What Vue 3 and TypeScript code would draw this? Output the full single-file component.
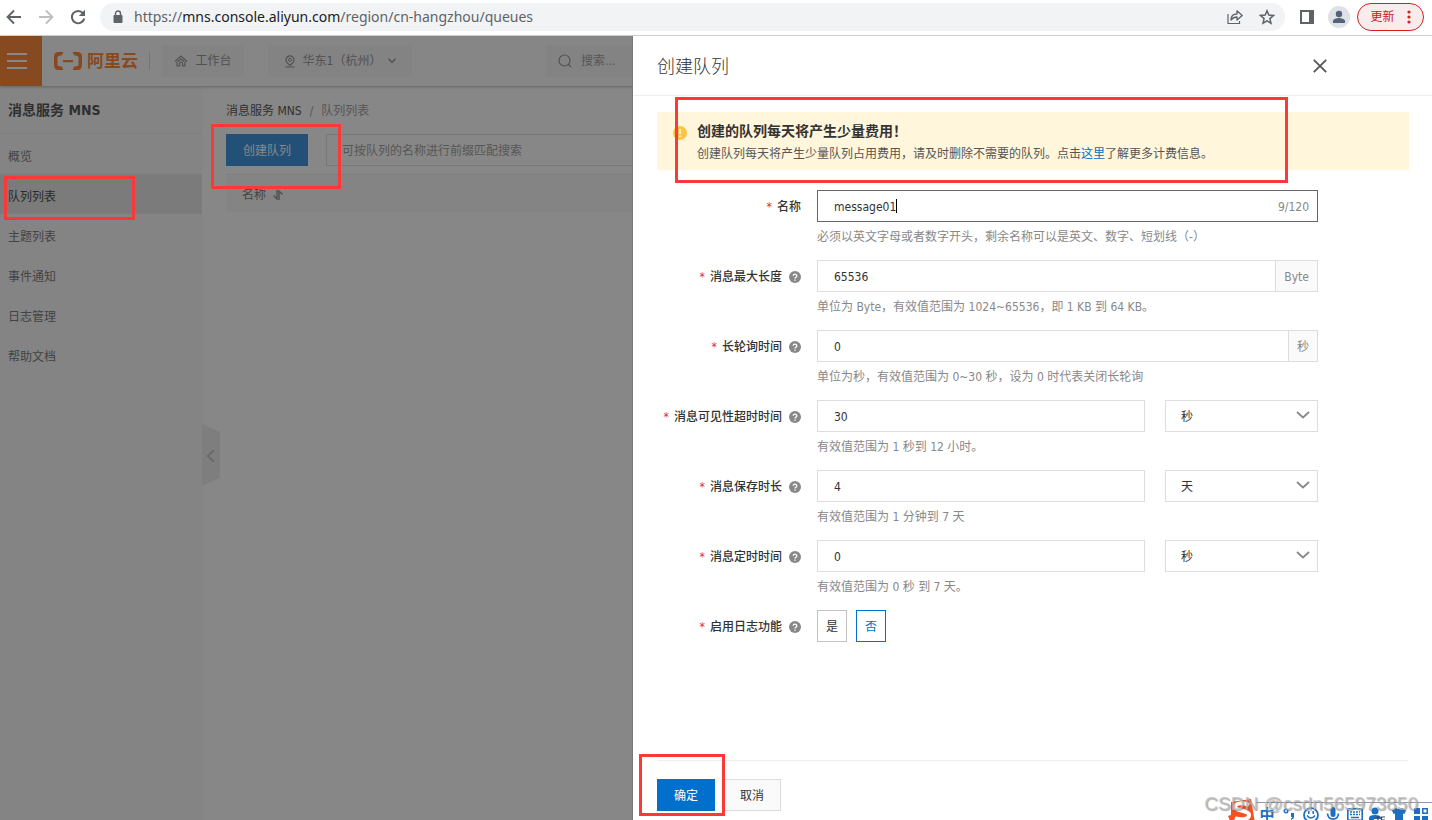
<script setup lang="ts">
import { computed, ref } from 'vue'

interface Field {
  id: string
  label: string
  value: string
  help: string
  addon?: string
  unit?: string
}

const menu: string[] = ['概览', '队列列表', '主题列表', '事件通知', '日志管理', '帮助文档']
const current = ref('队列列表')

const queueName = ref('message01')
const nameCount = computed(() => `${queueName.value.length}/120`)
const logging = ref('no')

const fields = ref<Field[]>([
  { id: 'max-size', label: '消息最大长度', value: '65536', addon: 'Byte', help: '单位为 Byte，有效值范围为 1024~65536，即 1 KB 到 64 KB。' },
  { id: 'polling', label: '长轮询时间', value: '0', addon: '秒', help: '单位为秒，有效值范围为 0~30 秒，设为 0 时代表关闭长轮询' },
  { id: 'visibility', label: '消息可见性超时时间', value: '30', unit: '秒', help: '有效值范围为 1 秒到 12 小时。' },
  { id: 'retention', label: '消息保存时长', value: '4', unit: '天', help: '有效值范围为 1 分钟到 7 天' },
  { id: 'delay', label: '消息定时时间', value: '0', unit: '秒', help: '有效值范围为 0 秒 到 7 天。' },
])
const units: string[] = ['秒', '分钟', '小时', '天']
</script>

<template>
  <div class="window">
    <div class="browser">
      <button class="nav-btn" aria-label="后退">
        <svg width="16" height="16" viewBox="0 0 16 16"><path d="M15 8H2M8 1.5 1.6 8 8 14.500" fill="none" stroke="#5f6368" stroke-width="1.900" /></svg>
      </button>
      <button class="nav-btn" aria-label="前进">
        <svg width="16" height="16" viewBox="0 0 16 16"><path d="M1 8h13M8 1.5 14.400 8 8 14.500" fill="none" stroke="#bdc0c3" stroke-width="1.900" /></svg>
      </button>
      <button class="nav-btn" aria-label="重新加载">
        <svg width="16" height="16" viewBox="0 0 16 16"><path d="M13 4.200A6.200 6.200 0 1 0 14.200 9.500" fill="none" stroke="#5f6368" stroke-width="2" /><path d="M15 .8v6.200H8.800z" fill="#5f6368" /></svg>
      </button>
      <div class="omnibox">
        <svg width="10" height="13" viewBox="0 0 10 13"><rect x="0.500" y="5" width="9" height="8" rx="1" fill="#5f6368" /><path d="M2.500 5.500V3.500a2.500 2.500 0 0 1 5 0v2" fill="none" stroke="#5f6368" stroke-width="1.400" /></svg>
        <span class="url">https://<b>mns.console.aliyun.com</b>/region/cn-hangzhou/queues</span>
        <button class="tool" aria-label="分享">
          <svg width="16" height="16" viewBox="0 0 16 16"><path d="M1 5v9.500h11.500V12" fill="none" stroke="#5f6368" stroke-width="1.200" /><path d="M4 11C4 7 6.500 5 10 5V1.800L15.200 6.500 10 11V8C7.500 8 5.500 9 4 11z" fill="none" stroke="#5f6368" stroke-width="1.300" stroke-linejoin="round" /></svg>
        </button>
        <button class="tool" aria-label="收藏">
          <svg width="16" height="16" viewBox="0 0 16 16"><path d="M8 1.800l1.800 4.300 4.700.4-3.600 3.100 1.100 4.600L8 11.800l-4 2.400 1.100-4.600L1.500 6.500l4.700-.4z" fill="none" stroke="#5f6368" stroke-width="1.500" /></svg>
        </button>
      </div>
      <button class="panel-btn" aria-label="侧边栏">
        <svg width="14" height="14" viewBox="0 0 14 14"><path d="M0 0h14v14H0z" fill="#5f6368" /><path d="M2 2h7v10H2z" fill="#fff" /></svg>
      </button>
      <button class="avatar" aria-label="用户">
        <svg width="14" height="14" viewBox="0 0 14 14"><circle cx="7" cy="4" r="3.200" fill="#53637a" /><path d="M1 13v-2c0-2 4-3 6-3s6 1 6 3v2z" fill="#53637a" /></svg>
      </button>
      <button class="update">更新
        <svg width="4" height="14" viewBox="0 0 4 14"><g fill="#d2201b"><circle cx="2" cy="2" r="1.600" /><circle cx="2" cy="7" r="1.600" /><circle cx="2" cy="12" r="1.600" /></g></svg>
      </button>
    </div>

    <div class="console">
      <header class="top">
        <button class="burger" aria-label="菜单"><i></i><i></i><i></i></button>
        <a class="logo" href="#">
          <svg width="30" height="18" viewBox="0 0 30 18"><path d="M10.500 0 9 3.300 5.500 4q-1 .3-1 1.500v7q0 1.200 1 1.500l3.500.7 1.500 3.300H5.500Q1 18 1 13V5Q1 0 5.500 0zM19.500 0 21 3.300l3.500.7q1 .3 1 1.500v7q0 1.200-1 1.500l-3.500.7-1.500 3.300h5Q29 18 29 13V5q0-5-4.500-5zM10 8h10v2.200H10z" fill="currentColor" /></svg>
          <strong>阿里云</strong>
        </a>
        <button class="chip workbench">
          <svg width="14" height="14" viewBox="0 0 14 14"><path d="M1 7.500 7 2l6 5.500M3 7.500V12h2.500V9.500a1.500 1.500 0 0 1 3 0V12H11V7.500M4 7.500 7 5l3 2.500" fill="none" stroke="currentColor" stroke-width="1.200" /></svg>
          工作台
        </button>
        <button class="chip region">
          <svg width="12" height="13" viewBox="0 0 12 13"><path d="M6 10.500C3.500 8.500 2 7 2 4.800a4 4 0 0 1 8 0C10 7 8.500 8.500 6 10.500zM1.500 12h9" fill="none" stroke="currentColor" stroke-width="1.200" /><circle cx="6" cy="4.800" r="1.500" fill="none" stroke="currentColor" /></svg>
          <span>华东1（杭州）</span>
          <svg width="8" height="6" viewBox="0 0 8 6"><path d="m.5.8 3.500 3.700L7.500.8" fill="none" stroke="currentColor" stroke-width="1.500" /></svg>
        </button>
        <label class="search">
          <svg width="14" height="14" viewBox="0 0 14 14"><circle cx="6.500" cy="6.500" r="5.500" fill="none" stroke="currentColor" stroke-width="1.200" /><path d="m10.500 10.500 2.500 2.500" stroke="currentColor" stroke-width="1.300" /></svg>
          <input type="search" placeholder="搜索..." aria-label="搜索" />
        </label>
      </header>

      <div class="layout">
        <nav class="side">
          <h1>消息服务 MNS</h1>
          <a v-for="item in menu" :key="item" href="#" :class="{ on: item === current }" @click.prevent="current = item">{{ item }}</a>
        </nav>
        <main class="content">
          <button class="collapse" aria-label="收起导航">
            <svg width="18" height="62" viewBox="0 0 18 62"><path d="M0 0l18 8v46L0 62z" fill="#eee" /><path d="m12 26-6 6 6 6" fill="none" stroke="#c8c8c8" stroke-width="2" /></svg>
          </button>
          <div class="crumbs"><a href="#">消息服务 MNS</a><span>/</span><span>队列列表</span></div>
          <div class="tools">
            <button class="create">创建队列</button>
            <input placeholder="可按队列的名称进行前缀匹配搜索" aria-label="搜索队列" />
          </div>
          <table>
            <thead>
              <tr>
                <th>名称
                  <svg width="10" height="10" viewBox="0 0 10 10"><path d="M4 0v9L.5 5.500M6 10V1l3.500 3.500" fill="none" stroke="#999" stroke-width="1.500" /></svg>
                </th>
              </tr>
            </thead>
          </table>
        </main>
      </div>
      <div class="mask"></div>
      <i class="mark mark-create"></i>
      <i class="mark mark-menu"></i>

      <section class="drawer" role="dialog" aria-labelledby="drawer-title">
        <div class="drawer-head">
          <h2 id="drawer-title">创建队列</h2>
          <button aria-label="关闭">
            <svg width="14" height="14" viewBox="0 0 14 14"><path d="m.8.8 12.400 12.400M13.200.8.8 13.200" stroke="#555" stroke-width="1.800" /></svg>
          </button>
        </div>
        <div class="drawer-body">
          <div class="notice">
            <svg width="14" height="14" viewBox="0 0 14 14"><circle cx="7" cy="7" r="7" fill="#ffc440" /><path d="M7 3v5M7 9.500v1.700" stroke="#fff6dc" stroke-width="1.800" /></svg>
            <div>
              <strong>创建的队列每天将产生少量费用！</strong>
              <p>创建队列每天将产生少量队列占用费用，请及时删除不需要的队列。点击<a href="#">这里</a>了解更多计费信息。</p>
            </div>
          </div>
          <form @submit.prevent>
            <div class="row">
              <label class="name" for="queue-name"><em>*</em>名称</label>
              <div class="control">
                <div class="box focus">
                  <input id="queue-name" v-model="queueName" class="grow" maxlength="120" /><i class="caret"></i>
                  <span class="count">{{ nameCount }}</span>
                </div>
                <p>必须以英文字母或者数字开头，剩余名称可以是英文、数字、短划线（-）</p>
              </div>
            </div>
            <div v-for="f in fields" :key="f.id" class="row">
              <label class="name" :for="f.id"><em>*</em>{{ f.label }}
                <svg width="12" height="12" viewBox="0 0 12 12"><circle cx="6" cy="6" r="6" fill="#888" /><path d="M4.200 4.800a1.800 1.700 0 1 1 2.600 1.500Q6 6.700 6 7.400M6 8.400v1.400" fill="none" stroke="#fff" stroke-width="1.300" /></svg>
              </label>
              <div class="control">
                <div class="pair">
                  <div class="box">
                    <input :id="f.id" v-model="f.value" />
                    <span v-if="f.addon" class="addon">{{ f.addon }}</span>
                  </div>
                  <div v-if="f.unit" class="select">
                    <select v-model="f.unit" :aria-label="f.label + '单位'">
                      <option v-for="u in units" :key="u">{{ u }}</option>
                    </select>
                    <svg width="14" height="8" viewBox="0 0 14 8"><path d="m1 1 6 5.500L13 1" fill="none" stroke="#888" stroke-width="1.700" /></svg>
                  </div>
                </div>
                <p>{{ f.help }}</p>
              </div>
            </div>
            <div class="row" role="radiogroup" aria-labelledby="logging-label">
              <span id="logging-label" class="name"><em>*</em>启用日志功能
                <svg width="12" height="12" viewBox="0 0 12 12"><circle cx="6" cy="6" r="6" fill="#888" /><path d="M4.200 4.800a1.800 1.700 0 1 1 2.600 1.500Q6 6.700 6 7.400M6 8.400v1.400" fill="none" stroke="#fff" stroke-width="1.300" /></svg>
              </span>
              <div class="radios">
                <label><input v-model="logging" type="radio" name="logging" value="yes" /><span>是</span></label>
                <label><input v-model="logging" type="radio" name="logging" value="no" /><span>否</span></label>
              </div>
            </div>
          </form>
          <i class="mark mark-notice"></i>
        </div>
        <div class="drawer-foot">
          <button class="ok">确定</button>
          <button>取消</button>
          <i class="mark mark-ok"></i>
        </div>
      </section>
    </div>

    <div class="ime">
      <svg width="28" height="24" viewBox="0 0 28 24"><path d="M3 3 23 0l4 24H3L0 17l3-1z" fill="#f4511e" /><path d="M21 6C15 3 7 4 7 8s14 3 14 8-9 5-14 3" fill="none" stroke="#fff" stroke-width="4" /></svg>
      <div class="ime-bar">
        <span>中</span>
        <span><svg width="12" height="16" viewBox="0 0 12 16"><circle cx="3" cy="4" r="1.800" fill="none" stroke="#1b6fc2" stroke-width="1.400" /><path d="M8 6h3v4q0 2-3 3v-1.500q1.200-.5 1.200-1.500H8z" fill="#1b6fc2" /></svg></span>
        <span><svg width="16" height="16" viewBox="0 0 16 16"><circle cx="8" cy="8" r="7" fill="none" stroke="#1b6fc2" stroke-width="1.700" /><path d="M5.800 4v3M10.200 4v3M4 8.500q4 5 8 0" fill="none" stroke="#1b6fc2" stroke-width="1.500" /></svg></span>
        <span><svg width="14" height="16" viewBox="0 0 14 16"><rect x="4.500" y="0" width="5" height="10" rx="2.500" fill="#1b6fc2" /><path d="M1.500 6.500q.5 5.500 5.500 5.500t5.500-5.500M7 12v4" fill="none" stroke="#1b6fc2" stroke-width="1.700" /></svg></span>
        <span><svg width="16" height="13" viewBox="0 0 16 13"><rect x=".8" y=".8" width="14.400" height="11.400" rx="1" fill="#fff" stroke="#1b6fc2" stroke-width="1.600" /><path d="M3 4h10M3 6.500h10" stroke="#1b6fc2" stroke-width="1.500" stroke-dasharray="2 1" /><path d="M4 9.500h8" stroke="#1b6fc2" stroke-width="1.500" /></svg></span>
        <span><svg width="17" height="16" viewBox="0 0 17 16"><circle cx="6" cy="4" r="3.500" fill="#1b6fc2" /><path d="M0 11q0-3 6-3t6 3v1H5v2H0z" fill="#1b6fc2" /><path d="M7 10h4M9 10v6M16 10h-3.500v6M12.500 13H16" fill="none" stroke="#445" stroke-width="1.200" /></svg></span>
        <span><svg width="14" height="16" viewBox="0 0 14 16"><path d="M4 1q3 2 6 0l4 2.500L12.500 7 11 6.500V16H3V6.500L1.500 7 0 3.500z" fill="#1b6fc2" /></svg></span>
        <span><svg width="14" height="16" viewBox="0 0 14 16"><path d="M0 1h6v6H0zM0 9h6v6H0zM8 9h6v6H8z" fill="#1b6fc2" /><path d="M8.800 1.800h4.400v4.400H8.800z" fill="none" stroke="#1b6fc2" stroke-width="1.500" /></svg></span>
      </div>
    </div>
    <div class="watermark">CSDN @csdn565973850</div>
  </div>
</template>

<style>
body { margin: 0; }
</style>

<style scoped>
* { box-sizing: border-box; }
.window {
  position: relative;
  display: flex;
  flex-direction: column;
  min-height: 100vh;
  overflow: hidden;
  background: #fff;
  color: #333;
  font: 12px/18px "DejaVu Sans Condensed", "Noto Sans CJK SC", sans-serif;
}
button, input, select { margin: 0; padding: 0; border: 0; border-radius: 0; background: none; font: inherit; color: inherit; outline: 0; }
button { display: flex; align-items: center; justify-content: center; cursor: pointer; }
svg { display: block; flex: none; }
a { color: inherit; text-decoration: none; }
h1, h2, p { margin: 0; }

.browser { display: flex; align-items: center; height: 36px; padding: 0 8px 2px 6px; border-bottom: 1px solid #d8dadc; background: #fff; }
.nav-btn { width: 16px; height: 28px; margin-right: 16px; }
.omnibox { display: flex; flex: 1; align-items: center; min-width: 0; height: 28px; margin-right: 14px; padding: 0 10px 0 13px; border-radius: 14px; background: #f1f3f4; }
.nav-btn:nth-child(3) { margin-right: 14px; }
.url { flex: 1; overflow: hidden; margin-left: 11px; color: #5f6368; font: 14px/20px "Noto Sans", sans-serif; white-space: nowrap; }
.url b { color: #202124; font-weight: 400; }
.tool { width: 16px; margin-left: 16px; }
.panel-btn { width: 16px; margin-right: 13px; }
.avatar { width: 22px; height: 22px; margin-right: 7px; border-radius: 50%; background: #dee1e6; }
.update { gap: 12px; width: 67px; height: 28px; border: 1px solid #d2201b; border-radius: 14px; background: #faecec; color: #c5221f; }

.console { position: relative; display: flex; flex: 1; flex-direction: column; }
.top { display: flex; align-items: center; height: 50px; background: #fdfdfd; box-shadow: 0 1px 3px rgba(0, 0, 0, .25); color: #999; z-index: 1; }
.burger { flex-direction: column; gap: 5px; width: 42px; height: 50px; padding-right: 8px; background: #ff8d3d; }
.burger i { width: 20px; height: 2px; background: #fff; }
.logo { display: flex; align-items: center; gap: 4px; height: 18px; margin-left: 11px; padding-right: 11px; border-right: 1px solid #ddd; color: #ff8d3d; }
.logo strong { font-size: 17px; line-height: 18px; }
.chip { height: 32px; background: #f7f7f7; }
.workbench { gap: 7px; width: 82px; margin-left: 12px; }
.region { gap: 7px; width: 144px; margin-left: 24px; }
.search { display: flex; align-items: center; gap: 9px; height: 32px; margin-left: 134px; padding-left: 12px; background: #f7f7f7; }
input::placeholder { color: #a4a4a4; opacity: 1; }
.layout { display: flex; flex: 1; }
.side { width: 202px; background: #fafafa; color: #808080; }
.side h1 { height: 48px; border-bottom: 1px solid #eee; padding: 0 8px; color: #5c5c5c; font-size: 14px; line-height: 48px; }
.side a { display: block; height: 40px; padding: 6px 8px 0; line-height: 34px; }
.side a.on { background: #e9e9e9; color: #505050; }
.content { position: relative; flex: 1; padding: 16px 24px; background: #fff; }
.collapse { position: absolute; left: 0; top: 50%; margin-top: -29px; }
.crumbs { display: flex; gap: 8px; color: #5c5c5c; }
.crumbs span { color: #a4a4a4; }
.tools { display: flex; gap: 18px; margin-top: 14px; }
.create { width: 82px; height: 32px; padding-top: 2px; background: #4098e0; color: #fff; }
.tools input { flex: 1; height: 32px; padding: 2px 15px 0; border: 1px solid #e2e2e2; }
table { width: 100%; margin-top: 8px; border-spacing: 0; }
th { height: 38px; padding: 2px 16px 0; border-top: 1px solid #eee; background: #fafafa; color: #808080; font-weight: 400; text-align: left; }
th svg { display: inline-block; margin-left: 4px; vertical-align: -1px; }
.mask { position: absolute; inset: 0; z-index: 2; background: rgba(0, 0, 0, .47); }

.drawer { position: absolute; top: 0; right: 0; bottom: 0; z-index: 4; display: flex; flex-direction: column; width: 800px; max-width: 100%; border-left: 1px solid #777; background: #fff; }
.drawer-head { display: flex; align-items: center; justify-content: space-between; height: 60px; padding: 0 105px 0 24px; border-bottom: 1px solid #eee; }
.drawer-head h2 { padding-top: 2px; font-size: 18px; font-weight: 300; line-height: 28px; }
.drawer-body { position: relative; flex: 1; padding: 16px 23px 0 24px; }
.notice { display: flex; gap: 10px; height: 58px; padding: 9px 16px; background: #fff6dc; }
.notice svg { margin-top: 5px; }
.notice strong { display: block; font-size: 14px; line-height: 20px; }
.notice p { margin-top: 4px; color: #555; }
.notice p a { color: #0070cc; }
form { margin-top: 20px; }
.row { display: flex; gap: 16px; margin-bottom: 14px; }
.name { display: flex; flex: none; align-items: center; justify-content: flex-end; width: 144px; height: 32px; padding-top: 2px; font-weight: 500; white-space: nowrap; }
.name em { margin-right: 5px; color: #d93026; font-style: normal; }
.name svg { margin-left: 7px; }
.control { flex: 0 1 501px; }
.control p { margin-top: 6px; color: #888; }
.pair { display: flex; gap: 20px; }
.box { display: flex; flex: 1; align-items: center; height: 32px; border: 1px solid #ddd; }
.box input { flex: 1; min-width: 0; padding: 2px 0 0 16px; }
.box.focus { border-color: #666; }
.box .grow { flex: none; field-sizing: content; }
.caret { width: 1px; height: 14px; background: #000; }
.count { margin-left: auto; padding: 2px 8px 0 0; color: #888; }
.addon { height: 30px; padding: 2px 8px 0; border-left: 1px solid #ddd; background: #fafafa; color: #888; line-height: 28px; }
.select { position: relative; width: 153px; height: 32px; border: 1px solid #ddd; }
.select select { width: 100%; height: 30px; padding: 2px 15px 0; appearance: none; }
.select svg { position: absolute; top: 10px; right: 7px; pointer-events: none; }
.radios { display: flex; gap: 9px; }
.radios label { position: relative; }
.radios input { position: absolute; inset: 0; opacity: 0; }
.radios span { display: block; width: 30px; height: 32px; padding-top: 2px; border: 1px solid #c4c4c4; line-height: 28px; text-align: center; }
.radios input:checked + span { border-color: #0070cc; color: #0070cc; }
.drawer-foot { position: relative; display: flex; gap: 8px; height: 60px; margin: 0 24px; padding-top: 18px; border-top: 1px solid #eee; }
.drawer-foot button { width: 58px; height: 32px; padding-top: 2px; border: 1px solid #ddd; background: #fafafa; }
.drawer-foot .ok { border-color: #0070cc; background: #0070cc; color: #fff; }

.mark { position: absolute; z-index: 3; border: 3px solid #fd3838; pointer-events: none; }
.mark-create { left: 211px; top: 88px; width: 130px; height: 65px; }
.mark-menu { left: 4px; top: 140px; width: 131px; height: 44px; }
.mark-notice { left: 42px; top: 1px; width: 613px; height: 86px; }
.mark-ok { left: -18px; top: -7px; width: 86px; height: 62px; }

.ime { position: absolute; right: 0; bottom: 0; z-index: 5; display: flex; align-items: flex-start; height: 21px; overflow: hidden; }
.ime-bar { display: flex; align-items: center; height: 24px; margin-top: 3px; border-top: 1px solid #8f97b8; background: #fff; color: #1b6fc2; font-size: 15px; font-weight: 700; }
.ime-bar span { display: flex; justify-content: center; width: 22px; }
.watermark { position: absolute; right: 14px; bottom: 4px; z-index: 6; color: rgba(185, 185, 185, .75); font: 19px/24px "Liberation Sans", sans-serif; text-shadow: 1px 1px 1px rgba(90, 90, 90, .5); white-space: nowrap; }
</style>
